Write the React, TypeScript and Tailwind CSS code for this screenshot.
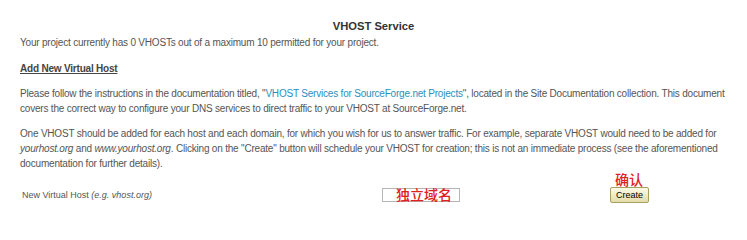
export default function App() {
  return (
    <div className="w-[747px] h-[220px] bg-white text-[#555] font-['Liberation_Sans',Arial,sans-serif] text-[10px] leading-[15px] tracking-[-0.2px] overflow-hidden">
      <div className="px-[20px] pt-[19px]">
        <h1 className="text-center font-bold text-[11.2px] leading-[15px] tracking-normal text-[#333]">VHOST Service</h1>
        <p className="mt-[1px]">Your project currently has 0 VHOSTs out of a maximum 10 permitted for your project.</p>

        <h2 className="mt-[11px] font-bold underline text-[#444]">Add New Virtual Host</h2>

        <p className="mt-[10px] whitespace-nowrap">
          Please follow the instructions in the documentation titled, "
          <a href="#" className="text-[#2a8fbd]">VHOST Services for SourceForge.net Projects</a>
          ", located in the Site Documentation collection. This document
          <br />
          covers the correct way to configure your DNS services to direct traffic to your VHOST at SourceForge.net.
        </p>

        <p className="mt-[10px] whitespace-nowrap">
          One VHOST should be added for each host and each domain, for which you wish for us to answer traffic. For example, separate VHOST would need to be added for
          <br />
          <i>yourhost.org</i> and <i>www.yourhost.org</i>. Clicking on the "Create" button will schedule your VHOST for creation; this is not an immediate process (see the aforementioned
          <br />
          documentation for further details).
        </p>

        <div className="mt-[16px] flex items-center">
          <div className="w-[362px] pl-[2px] text-[9px] tracking-normal">
            New Virtual Host <i>(e.g. vhost.org)</i>
          </div>
          <div className="relative">
            <input
              type="text"
              className="block w-[78px] h-[14px] border border-[#b5b5b5] bg-white"
            />
            <span className="absolute left-[14px] top-[-3px] text-[14px] leading-[18px] font-medium tracking-normal text-[#e02020] font-['Noto_Sans_CJK_SC',sans-serif] pointer-events-none whitespace-nowrap">
              独立域名
            </span>
          </div>
          <div className="relative ml-[150px]">
            <span className="absolute left-[5px] top-[-16px] text-[14px] leading-[16px] font-medium tracking-normal text-[#e02020] font-['Noto_Sans_CJK_SC',sans-serif] whitespace-nowrap">
              确认
            </span>
            <button className="h-[16px] px-[5px] text-[9px] leading-[14px] tracking-normal text-black border border-[#a8a060] rounded-[2px] bg-gradient-to-b from-[#fdfbe6] to-[#e3dcaa]">
              Create
            </button>
          </div>
        </div>
      </div>
    </div>
  );
}
